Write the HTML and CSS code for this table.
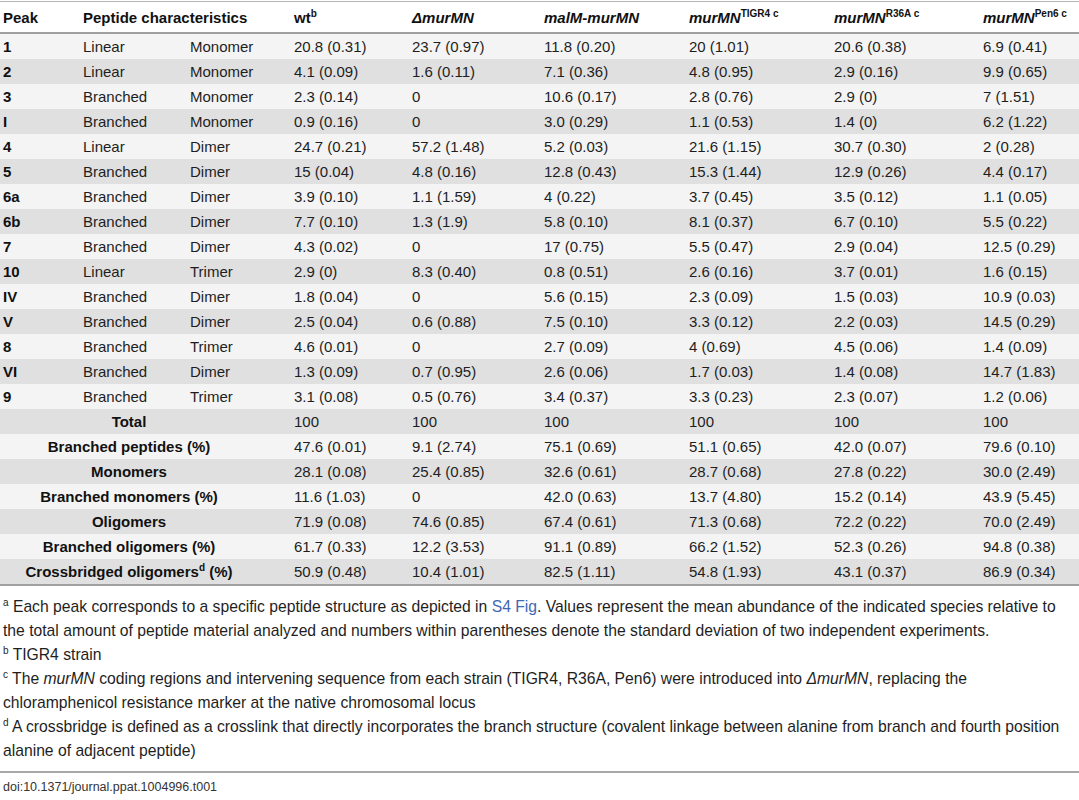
FILE: index.html
```html
<!DOCTYPE html>
<html>
<head>
    <title>Table 1</title>
    <link rel="stylesheet" href="styles.css">
</head>
<body>
    <table class="data">
        <colgroup>
            <col style="width: 80px">
            <col style="width: 107px">
            <col style="width: 104px">
            <col style="width: 118px">
            <col style="width: 132px">
            <col style="width: 145px">
            <col style="width: 145px">
            <col style="width: 149px">
            <col style="width: 99px">
        </colgroup>
        <thead>
            <tr>
                <th>Peak</th>
                <th colspan="2">Peptide characteristics</th>
                <th>wt<sup>b</sup></th>
                <th><i>Δ</i><i>murMN</i></th>
                <th><i>malM-murMN</i></th>
                <th><i>murMN</i><sup>TIGR4 c</sup></th>
                <th><i>murMN</i><sup>R36A c</sup></th>
                <th><i>murMN</i><sup>Pen6 c</sup></th>
            </tr>
        </thead>
        <tbody>
            <tr><td class="peak">1</td><td>Linear</td><td>Monomer</td><td>20.8 (0.31)</td><td>23.7 (0.97)</td><td>11.8 (0.20)</td><td>20 (1.01)</td><td>20.6 (0.38)</td><td>6.9 (0.41)</td></tr>
            <tr><td class="peak">2</td><td>Linear</td><td>Monomer</td><td>4.1 (0.09)</td><td>1.6 (0.11)</td><td>7.1 (0.36)</td><td>4.8 (0.95)</td><td>2.9 (0.16)</td><td>9.9 (0.65)</td></tr>
            <tr><td class="peak">3</td><td>Branched</td><td>Monomer</td><td>2.3 (0.14)</td><td>0</td><td>10.6 (0.17)</td><td>2.8 (0.76)</td><td>2.9 (0)</td><td>7 (1.51)</td></tr>
            <tr><td class="peak">I</td><td>Branched</td><td>Monomer</td><td>0.9 (0.16)</td><td>0</td><td>3.0 (0.29)</td><td>1.1 (0.53)</td><td>1.4 (0)</td><td>6.2 (1.22)</td></tr>
            <tr><td class="peak">4</td><td>Linear</td><td>Dimer</td><td>24.7 (0.21)</td><td>57.2 (1.48)</td><td>5.2 (0.03)</td><td>21.6 (1.15)</td><td>30.7 (0.30)</td><td>2 (0.28)</td></tr>
            <tr><td class="peak">5</td><td>Branched</td><td>Dimer</td><td>15 (0.04)</td><td>4.8 (0.16)</td><td>12.8 (0.43)</td><td>15.3 (1.44)</td><td>12.9 (0.26)</td><td>4.4 (0.17)</td></tr>
            <tr><td class="peak">6a</td><td>Branched</td><td>Dimer</td><td>3.9 (0.10)</td><td>1.1 (1.59)</td><td>4 (0.22)</td><td>3.7 (0.45)</td><td>3.5 (0.12)</td><td>1.1 (0.05)</td></tr>
            <tr><td class="peak">6b</td><td>Branched</td><td>Dimer</td><td>7.7 (0.10)</td><td>1.3 (1.9)</td><td>5.8 (0.10)</td><td>8.1 (0.37)</td><td>6.7 (0.10)</td><td>5.5 (0.22)</td></tr>
            <tr><td class="peak">7</td><td>Branched</td><td>Dimer</td><td>4.3 (0.02)</td><td>0</td><td>17 (0.75)</td><td>5.5 (0.47)</td><td>2.9 (0.04)</td><td>12.5 (0.29)</td></tr>
            <tr><td class="peak">10</td><td>Linear</td><td>Trimer</td><td>2.9 (0)</td><td>8.3 (0.40)</td><td>0.8 (0.51)</td><td>2.6 (0.16)</td><td>3.7 (0.01)</td><td>1.6 (0.15)</td></tr>
            <tr><td class="peak">IV</td><td>Branched</td><td>Dimer</td><td>1.8 (0.04)</td><td>0</td><td>5.6 (0.15)</td><td>2.3 (0.09)</td><td>1.5 (0.03)</td><td>10.9 (0.03)</td></tr>
            <tr><td class="peak">V</td><td>Branched</td><td>Dimer</td><td>2.5 (0.04)</td><td>0.6 (0.88)</td><td>7.5 (0.10)</td><td>3.3 (0.12)</td><td>2.2 (0.03)</td><td>14.5 (0.29)</td></tr>
            <tr><td class="peak">8</td><td>Branched</td><td>Trimer</td><td>4.6 (0.01)</td><td>0</td><td>2.7 (0.09)</td><td>4 (0.69)</td><td>4.5 (0.06)</td><td>1.4 (0.09)</td></tr>
            <tr><td class="peak">VI</td><td>Branched</td><td>Dimer</td><td>1.3 (0.09)</td><td>0.7 (0.95)</td><td>2.6 (0.06)</td><td>1.7 (0.03)</td><td>1.4 (0.08)</td><td>14.7 (1.83)</td></tr>
            <tr><td class="peak">9</td><td>Branched</td><td>Trimer</td><td>3.1 (0.08)</td><td>0.5 (0.76)</td><td>3.4 (0.37)</td><td>3.3 (0.23)</td><td>2.3 (0.07)</td><td>1.2 (0.06)</td></tr>
            <tr><td class="label" colspan="3">Total</td><td>100</td><td>100</td><td>100</td><td>100</td><td>100</td><td>100</td></tr>
            <tr><td class="label" colspan="3">Branched peptides (%)</td><td>47.6 (0.01)</td><td>9.1 (2.74)</td><td>75.1 (0.69)</td><td>51.1 (0.65)</td><td>42.0 (0.07)</td><td>79.6 (0.10)</td></tr>
            <tr><td class="label" colspan="3">Monomers</td><td>28.1 (0.08)</td><td>25.4 (0.85)</td><td>32.6 (0.61)</td><td>28.7 (0.68)</td><td>27.8 (0.22)</td><td>30.0 (2.49)</td></tr>
            <tr><td class="label" colspan="3">Branched monomers (%)</td><td>11.6 (1.03)</td><td>0</td><td>42.0 (0.63)</td><td>13.7 (4.80)</td><td>15.2 (0.14)</td><td>43.9 (5.45)</td></tr>
            <tr><td class="label" colspan="3">Oligomers</td><td>71.9 (0.08)</td><td>74.6 (0.85)</td><td>67.4 (0.61)</td><td>71.3 (0.68)</td><td>72.2 (0.22)</td><td>70.0 (2.49)</td></tr>
            <tr><td class="label" colspan="3">Branched oligomers (%)</td><td>61.7 (0.33)</td><td>12.2 (3.53)</td><td>91.1 (0.89)</td><td>66.2 (1.52)</td><td>52.3 (0.26)</td><td>94.8 (0.38)</td></tr>
            <tr><td class="label" colspan="3">Crossbridged oligomers<sup>d</sup> (%)</td><td>50.9 (0.48)</td><td>10.4 (1.01)</td><td>82.5 (1.11)</td><td>54.8 (1.93)</td><td>43.1 (0.37)</td><td>86.9 (0.34)</td></tr>
        </tbody>
    </table>

    <div class="notes">
        <p><sup>a</sup> Each peak corresponds to a specific peptide structure as depicted in <a href="#">S4 Fig</a>. Values represent the mean abundance of the indicated species relative to the total amount of peptide material analyzed and numbers within parentheses denote the standard deviation of two independent experiments.</p>
        <p><sup>b</sup> TIGR4 strain</p>
        <p><sup>c</sup> The <i>murMN</i> coding regions and intervening sequence from each strain (TIGR4, R36A, Pen6) were introduced into <i>ΔmurMN</i>, replacing the chloramphenicol resistance marker at the native chromosomal locus</p>
        <p><sup>d</sup> A crossbridge is defined as a crosslink that directly incorporates the branch structure (covalent linkage between alanine from branch and fourth position alanine of adjacent peptide)</p>
    </div>

    <div class="doi">doi:10.1371/journal.ppat.1004996.t001</div>
</body>
</html>
```

FILE: styles.css
```css
body {
    margin: 0;
    font-family: "Liberation Sans", Arial, sans-serif;
    color: #1e1e1e;
    background: #fff;
}

.data {
    width: 1079px;
    table-layout: fixed;
    border-collapse: collapse;
    margin-top: 1px;
    font-size: 15px;
}

.data thead tr {
    border-top: 1px solid #b5b5b5;
    border-bottom: 2px solid #a0a0a0;
}

.data th {
    height: 30px;
    padding: 0 0 0 3px;
    text-align: left;
    font-weight: bold;
    font-size: 15px;
    color: #111;
    white-space: nowrap;
}

.data td {
    height: 25px;
    padding: 0 0 0 3px;
    white-space: nowrap;
    vertical-align: middle;
}

.data tbody tr:nth-child(odd) {
    background: #f4f4f4;
}

.data tbody tr:nth-child(even) {
    background: #e0e0e0;
}

.data tbody tr:last-child {
    border-bottom: 2px solid #a0a0a0;
}

.data td.peak {
    font-weight: bold;
    color: #111;
}

.data td.label {
    text-align: center;
    font-weight: bold;
    color: #111;
    padding-right: 36px;
}

sup {
    font-size: 10px;
    line-height: 0;
    vertical-align: 6px;
}

.notes {
    padding-top: 9px;
    font-size: 15.7px;
    line-height: 24px;
    color: #1e1e1e;
}

.notes p {
    margin: 0;
    padding: 0 2px 0 3px;
}

.notes a {
    color: #3c68b4;
    text-decoration: none;
}

.doi {
    margin-top: 8px;
    border-top: 2px solid #a8a8a8;
    padding: 7px 0 0 3px;
    font-size: 12.5px;
    color: #333;
    width: 1077px;
}
```
